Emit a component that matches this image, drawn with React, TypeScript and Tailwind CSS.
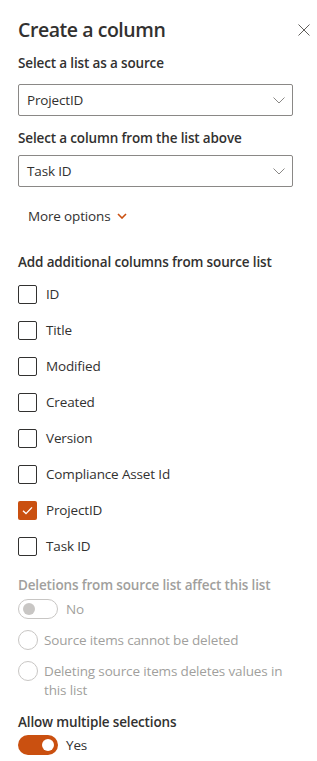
import React from "react";

function Chevron() {
  return (
    <svg width="12" height="7" viewBox="0 0 12 7" fill="none">
      <path d="M0.5 0.5 L6 6 L11.5 0.5" stroke="#8a8886" strokeWidth="1" />
    </svg>
  );
}

function Dropdown({ value, className }: { value: string; className?: string }) {
  return (
    <div
      className={
        "h-[32px] w-[275px] border border-[#8a8886] rounded-[2px] flex items-center justify-between pl-[8px] pr-[7px] text-[#323130] " +
        (className ?? "")
      }
    >
      <span>{value}</span>
      <Chevron />
    </div>
  );
}

function CheckRow({ label, checked }: { label: string; checked?: boolean }) {
  return (
    <div className="h-[36px] flex items-center">
      {checked ? (
        <div className="w-[19px] h-[19px] rounded-[2px] bg-[#ca5010] flex items-center justify-center">
          <svg width="13" height="13" viewBox="0 0 13 13" fill="none">
            <path d="M2 6.8 L5 9.6 L11 3.4" stroke="#ffffff" strokeWidth="1.3" />
          </svg>
        </div>
      ) : (
        <div className="w-[19px] h-[19px] rounded-[2px] border border-[#323130] bg-white" />
      )}
      <span className="ml-[9px] text-[#323130]">{label}</span>
    </div>
  );
}

function Radio({ children, className }: { children: React.ReactNode; className?: string }) {
  return (
    <div className={"flex items-start " + (className ?? "")}>
      <div className="w-[20px] h-[20px] shrink-0 rounded-full border border-[#c8c6c4] bg-white" />
      <div className="ml-[6px] w-[250px] leading-[19px] text-[#a19f9d] pt-[1px]">{children}</div>
    </div>
  );
}

export default function App() {
  const items = ["ID", "Title", "Modified", "Created", "Version", "Compliance Asset Id", "ProjectID", "Task ID"];
  return (
    <div className="w-[317px] h-[761px] bg-white overflow-hidden font-['Open_Sans',sans-serif] text-[13.5px] tracking-[-0.15px]">
      <div className="flex items-center justify-between pt-[16px] pl-[18px] pr-[7px]">
        <div className="text-[19.5px] tracking-[-0.45px] leading-[28px] font-semibold text-[#323130]">Create a column</div>
        <svg width="12" height="12" viewBox="0 0 12 12" fill="none">
          <path d="M0.5 0.5 L11.5 11.5 M11.5 0.5 L0.5 11.5" stroke="#605e5c" strokeWidth="1" />
        </svg>
      </div>
      <div className="pl-[18px] flex flex-col">
        <div className="mt-[9px] leading-[20px] font-semibold text-[#323130]">Select a list as a source</div>
        <Dropdown value="ProjectID" className="mt-[11px]" />
        <div className="mt-[12px] leading-[20px] font-semibold text-[#323130]">Select a column from the list above</div>
        <Dropdown value="Task ID" className="mt-[7px]" />
        <div className="mt-[13px] h-[32px] flex items-center pl-[10px] text-[#323130]">
          <span>More options</span>
          <svg className="ml-[6px]" width="10" height="6" viewBox="0 0 10 6" fill="none">
            <path d="M1 1 L5 5 L9 1" stroke="#ca5010" strokeWidth="1.6" />
          </svg>
        </div>
        <div className="mt-[20px] leading-[20px] font-semibold text-[#323130]">Add additional columns from source list</div>
        <div className="mt-[4px] flex flex-col">
          {items.map((it) => (
            <CheckRow key={it} label={it} checked={it === "ProjectID"} />
          ))}
        </div>
        <div className="mt-[11px] leading-[20px] font-semibold text-[#a19f9d]">Deletions from source list affect this list</div>
        <div className="mt-[4px] h-[20px] flex items-center">
          <div className="w-[40px] h-[20px] rounded-full border border-[#c8c6c4] flex items-center pl-[4px]">
            <div className="w-[12px] h-[12px] rounded-full bg-[#c8c6c4]" />
          </div>
          <span className="ml-[8px] text-[#a19f9d]">No</span>
        </div>
        <Radio className="mt-[11px]">Source items cannot be deleted</Radio>
        <Radio className="mt-[11px]">Deleting source items deletes values in this list</Radio>
        <div className="mt-[12px] leading-[20px] font-semibold text-[#323130]">Allow multiple selections</div>
        <div className="mt-[3px] h-[20px] flex items-center">
          <div className="w-[40px] h-[20px] rounded-full bg-[#ca5010] flex items-center justify-end pr-[4px]">
            <div className="w-[12px] h-[12px] rounded-full bg-white" />
          </div>
          <span className="ml-[8px] text-[#323130]">Yes</span>
        </div>
      </div>
    </div>
  );
}
